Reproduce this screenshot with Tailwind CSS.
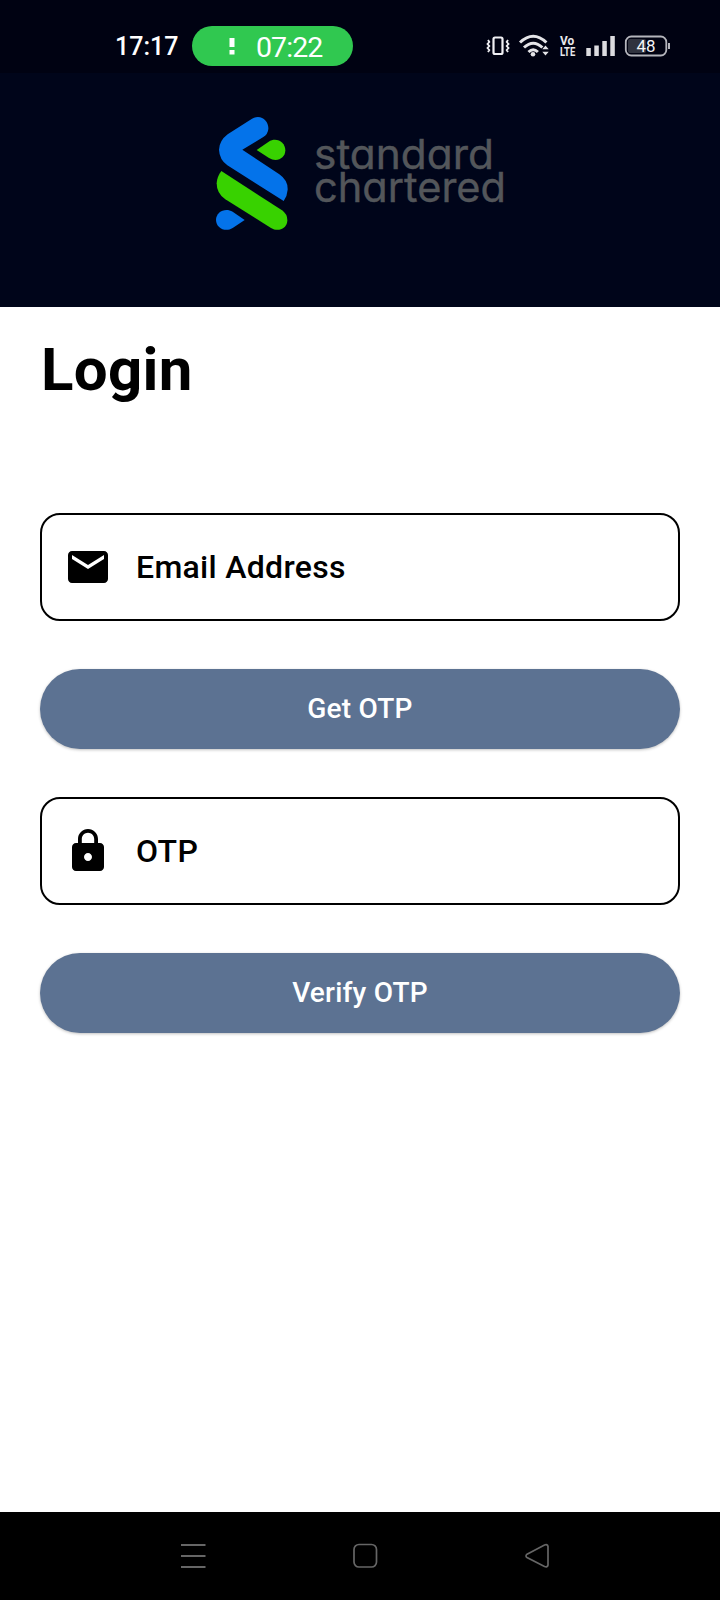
<!DOCTYPE html>
<html lang="en">
<head>
<meta charset="utf-8">
<title>Login</title>
<script src="https://cdn.jsdelivr.net/npm/@tailwindcss/browser@4"></script>
</head>
<body class="w-[720px] h-[1600px] flex flex-col bg-white font-['Roboto',sans-serif] text-black overflow-hidden">
<header class="h-[306.500px] shrink-0 bg-[#00051a]">
  <div class="h-[73px] pt-[26px] pl-[115px] pr-[49px] flex items-start bg-[#000212] text-white">
    <span class="w-[77px] h-10 leading-10 pt-px text-[25px] font-medium whitespace-nowrap">17:17</span>
    <div class="w-[161px] h-10 rounded-full bg-[#30c850] flex items-center pl-[37px]">
      <svg class="w-[6px] h-[18px]" viewBox="0 0 6 18" fill="#fff"><path d="M.5 1h5v9h-5zM.5 13h5v4.500h-5z"/></svg>
      <span class="ml-[21px] text-[28.500px] leading-10 tracking-[-0.9px] pt-[3px]">07:22</span>
    </div>
    <svg class="ml-auto w-[190px] h-10" viewBox="0 0 190 40" fill="none">
      <g stroke="#f0f0f4" stroke-width="2.200"><rect x="12.500" y="11.500" width="9" height="16.500" rx="1.500"/><path stroke-width="1.800" d="M7 14l1.300 2-1.800 2 1.800 2-1.800 2 1.800 2-1.300 2M27 14l-1.300 2 1.800 2-1.800 2 1.800 2-1.800 2 1.300 2"/></g>
      <g stroke="#e4e4e8" stroke-width="3"><path d="M39 16.500q13.200-12.500 26.400 0M43 21.500q9.200-8.500 18.400 0M47.500 26q4.700-4.500 9.400 0"/></g>
      <circle cx="52" cy="28.300" r="2.300" fill="#e4e4e8"/>
      <path d="M61.300 23.200l3.200-3.700 3.200 3.700zM61.300 25.800l3.200 3.700 3.200-3.700z" fill="#e4e4e8"/>
      <g fill="#e8e8ec" font-family="Roboto" font-weight="700" font-size="13.500"><text transform="translate(79 19.300) scale(.88 1)">Vo</text><text transform="translate(79 30) scale(.7 1)">LTE</text></g>
      <g fill="#dcdce0"><path d="M105.300 22h4.500v8h-4.500zM113.300 19.500h4.500v10.500h-4.500zM121.300 15h4.500v15h-4.500zM129.300 10h4.500v20h-4.500z"/></g>
      <rect x="147" y="13" width="18" height="14" rx="2" fill="#30333f"/>
      <rect x="144.800" y="10.500" width="40.500" height="19" rx="5.500" stroke="#b4b5bc" stroke-width="1.800"/>
      <path d="M188 17v6" stroke="#b4b5bc" stroke-width="2"/>
      <text x="155.500" y="26" font-family="Roboto" font-size="16" fill="#f4f4f6" textLength="19" lengthAdjust="spacingAndGlyphs">48</text>
    </svg>
  </div>
  <div class="pt-8 pl-[200px] flex">
    <svg class="w-[110px] h-[135px]" viewBox="0 0 330 405">
      <path fill="#0473ea" d="M156 41C184 26 207 49 205 72Q204 87 190 96L127 134L238 208Q264 226 263 254Q262 272 251 288L82 181Q58 163 57 134Q58 107 83 88Z"/>
      <path fill="#38d200" d="M170 135L206 110C230 95 256 112 256 136C256 160 230 173 207 159Z"/>
      <path fill="#38d200" d="M64 198L246 316Q263 328 262 348C260 371 234 382 213 369L76 283Q50 266 50 235Q51 215 64 198Z"/>
      <path fill="#0473ea" d="M134 345L98 369C76 383 48 369 48 345C48 321 75 307 98 320Z"/>
    </svg>
    <svg class="w-[220px] h-[135px]" viewBox="0 0 220 135" fill="#53565a" stroke="#53565a" stroke-width="0.400" font-family="Inter" font-size="41" style="font-feature-settings:'cv11'">
      <text x="4" y="63.800" textLength="180" lengthAdjust="spacingAndGlyphs">standard</text>
      <text x="4" y="96.600" textLength="192" lengthAdjust="spacingAndGlyphs">chartered</text>
    </svg>
  </div>
</header>
<main class="flex-1 px-10 pt-[27px] flex flex-col">
  <h1 class="h-[72px] pl-px leading-[72px] text-[60px] font-bold tracking-[0.3px]">Login</h1>
  <div class="mt-[107.500px] h-[107.500px] shrink-0 rounded-[20px] border-2 border-black flex items-center pl-[22px]">
    <svg class="w-12 h-12" viewBox="0 0 24 24"><path d="M20 4H4c-1.100 0-1.990.9-1.990 2L2 18c0 1.100.9 2 2 2h16c1.100 0 2-.9 2-2V6c0-1.100-.9-2-2-2zm0 4l-8 5-8-5V6l8 5 8-5v2z"/></svg>
    <span class="ml-6 text-[32px] font-medium tracking-[0.3px]">Email Address</span>
  </div>
  <button class="mt-12 h-[80px] pt-px shrink-0 rounded-full bg-[#5c7292] text-white text-[28px] font-medium tracking-[0.2px] shadow-[0_1px_3px_rgba(0,0,0,0.25)]">Get OTP</button>
  <div class="mt-12 h-[108px] shrink-0 rounded-[20px] border-2 border-black flex items-center pl-[22px]">
    <svg class="w-12 h-12" viewBox="0 0 24 24"><path d="M18 8h-1V6c0-2.760-2.240-5-5-5S7 3.240 7 6v2H6c-1.100 0-2 .9-2 2v10c0 1.100.9 2 2 2h12c1.100 0 2-.9 2-2V10c0-1.100-.9-2-2-2zm-6 9c-1.100 0-2-.9-2-2s.9-2 2-2 2 .9 2 2-.9 2-2 2zm3.100-9H8.900V6c0-1.710 1.390-3.100 3.100-3.100 1.710 0 3.100 1.390 3.100 3.100v2z"/></svg>
    <span class="ml-6 text-[32px] font-medium tracking-[0.3px]">OTP</span>
  </div>
  <button class="mt-12 h-[80px] pt-px shrink-0 rounded-full bg-[#5c7292] text-white text-[28px] font-medium tracking-[0.2px] shadow-[0_1px_3px_rgba(0,0,0,0.25)]">Verify OTP</button>
</main>
<nav class="h-[88px] shrink-0 bg-black flex items-center pl-[180px] pr-[170px] justify-between">
  <svg class="w-[26px] h-[26px]" viewBox="0 0 26 26" stroke="#666" stroke-width="2"><path d="M1 2h24.500M1 13h24.500M1 24h24.500"/></svg>
  <svg class="w-[26px] h-[26px]" viewBox="0 0 26 26" fill="none" stroke="#666" stroke-width="1.700"><rect x="2" y="1.500" width="22.500" height="22.500" rx="5"/></svg>
  <svg class="w-[26px] h-[26px]" viewBox="0 0 26 26" fill="none" stroke="#666" stroke-width="1.700"><path d="M3 11.200L20.500 2q3-1 3.500 1.500v18.500q-.5 2.500-3.500 1.500L3 14.500q-2-1.600 0-3.300z"/></svg>
</nav>
</body>
</html>
